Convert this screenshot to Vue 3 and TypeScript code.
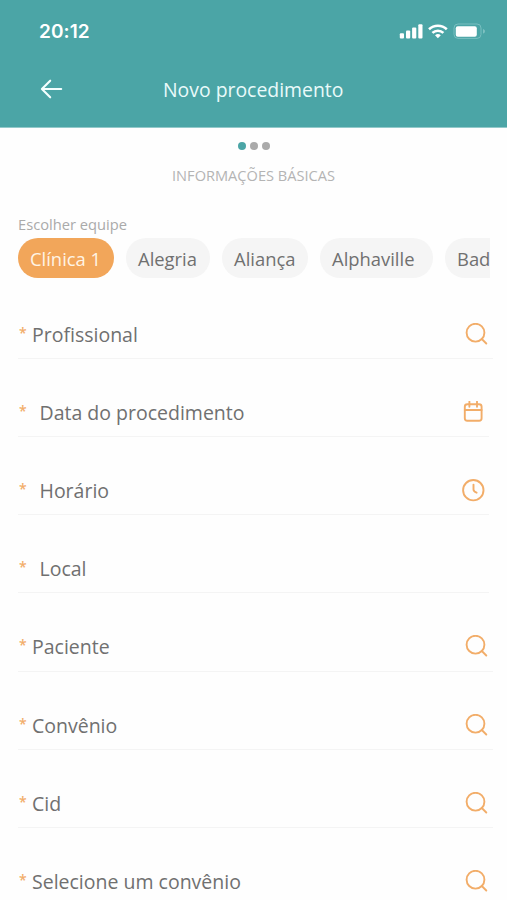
<script setup lang="ts">
type IconName = 'search' | 'calendar' | 'clock' | null

interface Team {
  name: string
  width: number
}

interface Field {
  label: string
  icon: IconName
  indented?: boolean
}

const teams: Team[] = [
  { name: 'Clínica 1', width: 96 },
  { name: 'Alegria', width: 84 },
  { name: 'Aliança', width: 86 },
  { name: 'Alphaville', width: 113 },
  { name: 'Bad', width: 45 },
]

const fields: Field[] = [
  { label: 'Profissional', icon: 'search' },
  { label: 'Data do procedimento', icon: 'calendar', indented: true },
  { label: 'Horário', icon: 'clock', indented: true },
  { label: 'Local', icon: null, indented: true },
  { label: 'Paciente', icon: 'search' },
  { label: 'Convênio', icon: 'search' },
  { label: 'Cid', icon: 'search' },
  { label: 'Selecione um convênio', icon: 'search' },
]
</script>

<template>
  <main class="screen">
    <header class="header">
      <div class="status">
        <span class="time">20:12</span>
        <svg class="indicators" width="88" height="18" viewBox="0 0 88 18">
          <g fill="#fff">
            <rect x="0.8" y="11.3" width="4.2" height="5.2" rx="1" />
            <rect x="7" y="8.5" width="4.2" height="8" rx="1" />
            <rect x="13.1" y="5.5" width="4.2" height="11" rx="1" />
            <rect x="19.3" y="2.3" width="4.2" height="14.2" rx="1" />
          </g>
          <g fill="none" stroke="#fff" stroke-width="2.6">
            <path d="M30 7.2a13 13 0 0 1 17.8 0" />
            <path d="M33.4 10.9a8 8 0 0 1 11 0" />
          </g>
          <path d="M36 13.3a4.2 4.2 0 0 1 5.8 0l-2.9 2.9z" fill="#fff" />
          <rect x="55" y="2" width="27" height="14.4" rx="4" fill="none" stroke="#78bfc0" />
          <rect x="56.8" y="4.2" width="21" height="10.6" rx="2" fill="#fff" />
          <path d="M84.1 7v4.6c2.4-.9 2.4-3.7 0-4.6z" fill="#84c4c4" />
        </svg>
      </div>
      <div class="bar">
        <svg class="back" width="24" height="22" viewBox="0 0 24 22">
          <path d="M22.2 11H3M11.2 2.7 2.9 11l8.3 8.3" />
        </svg>
        <h1 class="title">Novo procedimento</h1>
      </div>
    </header>

    <div class="steps">
      <i class="dot current"></i>
      <i class="dot"></i>
      <i class="dot"></i>
    </div>
    <h2 class="section">INFORMAÇÕES BÁSICAS</h2>

    <p class="team-label">Escolher equipe</p>
    <div class="teams">
      <button
        v-for="(team, i) in teams"
        :key="team.name"
        class="chip"
        :class="{ selected: i === 0, clipped: i === teams.length - 1 }"
        :style="{ width: team.width + 'px' }"
      >
        {{ team.name }}
      </button>
    </div>

    <div class="fields">
      <div v-for="field in fields" :key="field.label" class="field" :class="[{ indented: field.indented }, field.icon]">
        <span class="required">*</span>
        <span class="label">{{ field.label }}</span>
        <svg v-if="field.icon === 'search'" class="icon" width="24" height="24" viewBox="0 0 24 24">
          <circle cx="11.5" cy="9.7" r="8.9" />
          <path d="m17.8 16 4.5 4.5" />
        </svg>
        <svg v-else-if="field.icon === 'calendar'" class="icon" width="24" height="24" viewBox="0 0 24 24">
          <rect x="3.8" y="3.2" width="16.8" height="16.5" rx="2.5" />
          <path d="M3.8 9h16.8M8.4 .6v5.2M16 .6v5.2" />
        </svg>
        <svg v-else-if="field.icon === 'clock'" class="icon" width="24" height="24" viewBox="0 0 24 24">
          <circle cx="12.3" cy="11.2" r="10.2" />
          <path d="M12.5 5.6v4.9c0 1.2 1.5 2.6 3.1 3.2" />
        </svg>
      </div>
    </div>
  </main>
</template>

<style>
body {
  background: #fefefe;
  overflow: hidden;
}
</style>

<style scoped>
.screen {
  width: 507px;
  height: 900px;
  overflow: hidden;
  background: #fefefe;
  font-family: 'Open Sans', 'Noto Sans', sans-serif;
  color: #707070;
}

.header {
  box-sizing: border-box;
  height: 128px;
  background: #4ba5a6;
  border-bottom: 1px solid #93c9ca;
}

.status {
  display: flex;
  justify-content: space-between;
  padding: 22px 20px 0 39px;
  height: 18px;
  align-items: center;
}

.time {
  margin-top: 2px;
  font: 600 19px/18px Inter, sans-serif;
  letter-spacing: 0.1px;
  color: #fff;
}

.bar {
  display: grid;
  grid-template-columns: 124px 1fr;
  align-items: center;
  margin-top: 35px;
  padding-left: 39px;
  height: 26px;
}

.back {
  fill: none;
  stroke: #f4ffff;
  stroke-width: 2.1;
  stroke-linecap: round;
  stroke-linejoin: round;
}

.title {
  margin: 2px 0 0;
  font-size: 19.4px;
  line-height: 26px;
  font-weight: 400;
  color: #e9fafa;
}

.steps {
  display: flex;
  justify-content: center;
  gap: 4px;
  padding: 14px 0 0 1px;
}

.dot {
  width: 8px;
  height: 8px;
  border-radius: 50%;
  background: #aaa;
}

.dot.current {
  background: #4ba5a6;
}

.section {
  margin: 14px 0 0;
  font-size: 14.6px;
  line-height: 22px;
  font-weight: 400;
  text-align: center;
  color: #b4b4b4;
}

.team-label {
  margin: 28px 0 0 18px;
  font-size: 14.7px;
  line-height: 20px;
  color: #aaa;
}

.teams {
  display: flex;
  gap: 12px;
  margin: 4px 17px 0 18px;
  overflow: hidden;
}

.chip {
  flex: none;
  box-sizing: border-box;
  height: 40px;
  padding: 2px 0 0 12px;
  border: 0;
  border-radius: 20px;
  background: #f5f5f5;
  font: 400 18.4px/38px 'Open Sans', sans-serif;
  text-align: left;
  white-space: nowrap;
  color: #707070;
}

.chip.selected {
  background: #f2a65a;
  color: #fff4e5;
}

.chip.clipped {
  border-radius: 20px 0 0 20px;
}

.fields {
  display: grid;
  grid-auto-rows: 78.2px;
  margin: 2.6px 14px 0 18px;
}

.field {
  display: flex;
  align-items: center;
  box-sizing: border-box;
  padding: 31px 5px 0 1px;
  border-bottom: 1px solid #f4f4f4;
}

.indented {
  margin-right: 4px;
  padding-right: 1px;
}

.required {
  width: 13px;
  margin-top: -4px;
  font-size: 14px;
  font-weight: 600;
  line-height: 20px;
  color: #f2ad69;
}

.indented .required {
  width: 20.5px;
}

.label {
  font-size: 19.5px;
  line-height: 26px;
}

.icon {
  margin-left: auto;
  margin-right: 0.5px;
  fill: none;
  stroke: #f2ad69;
  stroke-width: 1.9;
  stroke-linecap: round;
}

.calendar .icon,
.clock .icon {
  margin-right: 3px;
}
</style>
